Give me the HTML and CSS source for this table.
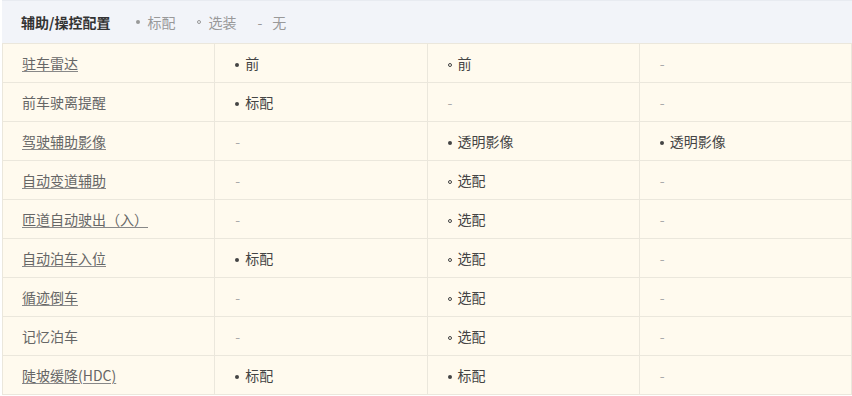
FILE: index.html
```html
<!DOCTYPE html>
<html lang="zh">
<head>
<meta charset="utf-8">
<link rel="stylesheet" href="styles.css">
</head>
<body>
<div class="wrap">
  <div class="head">
    <span class="title">辅助/操控配置</span>
    <span class="legend"><i class="dot"></i>标配</span>
    <span class="legend"><i class="ring"></i>选装</span>
    <span class="legend"><i class="dash">-</i>无</span>
  </div>
  <table class="grid">
    <tr><td class="name"><span class="link">驻车雷达</span></td><td><i class="dot"></i>前</td><td><i class="ring"></i>前</td><td class="none">-</td></tr>
    <tr><td class="name">前车驶离提醒</td><td><i class="dot"></i>标配</td><td class="none">-</td><td class="none">-</td></tr>
    <tr><td class="name"><span class="link">驾驶辅助影像</span></td><td class="none">-</td><td><i class="dot"></i>透明影像</td><td><i class="dot"></i>透明影像</td></tr>
    <tr><td class="name"><span class="link">自动变道辅助</span></td><td class="none">-</td><td><i class="ring"></i>选配</td><td class="none">-</td></tr>
    <tr><td class="name"><span class="link">匝道自动驶出（入）</span></td><td class="none">-</td><td><i class="ring"></i>选配</td><td class="none">-</td></tr>
    <tr><td class="name"><span class="link">自动泊车入位</span></td><td><i class="dot"></i>标配</td><td><i class="ring"></i>选配</td><td class="none">-</td></tr>
    <tr><td class="name"><span class="link">循迹倒车</span></td><td class="none">-</td><td><i class="ring"></i>选配</td><td class="none">-</td></tr>
    <tr><td class="name">记忆泊车</td><td class="none">-</td><td><i class="ring"></i>选配</td><td class="none">-</td></tr>
    <tr><td class="name"><span class="link">陡坡缓降(HDC)</span></td><td><i class="dot"></i>标配</td><td><i class="dot"></i>标配</td><td class="none">-</td></tr>
  </table>
</div>
</body>
</html>
```
FILE: styles.css
```css
html, body {
  margin: 0;
  padding: 0;
  background: #ffffff;
}
body {
  font-family: "Microsoft YaHei", "Noto Sans CJK SC", "Noto Sans", sans-serif;
  font-size: 14px;
  color: #444;
}
.wrap {
  margin-left: 2px;
  width: 850px;
}
.head {
  height: 43px;
  background: #f2f4f9;
  border-top: 1px solid #e8ebf1;
  display: flex;
  align-items: center;
  padding-left: 19px;
  box-sizing: border-box;
}
.title {
  font-weight: bold;
  color: #333;
  margin-right: 25px;
}
.legend {
  color: #999;
  margin-right: 21px;
  display: inline-flex;
  align-items: center;
}
.legend .dot,
.legend .ring {
  margin-right: 7px;
}
.dash {
  font-style: normal;
  margin-right: 10px;
}
.dot {
  display: inline-block;
  width: 4px;
  height: 4px;
  border-radius: 50%;
  background: currentColor;
  margin: 0 6px 0 1px;
  vertical-align: middle;
}
.ring {
  display: inline-block;
  width: 4px;
  height: 4px;
  border-radius: 50%;
  border: 1px solid currentColor;
  box-sizing: border-box;
  margin: 0 6px 0 1px;
  vertical-align: middle;
}
.grid {
  width: 850px;
  border-collapse: collapse;
  table-layout: fixed;
  background: #fffaee;
}
.grid td {
  height: 38px;
  padding: 0 0 0 19px;
  border: 1px solid #ebe7dc;
  color: #444;
  white-space: nowrap;
}
.grid td.name {
  color: #666;
}
.grid td.none {
  color: #aaa;
  padding-left: 20px;
}
.link {
  text-decoration: underline;
  text-decoration-color: #888;
  text-underline-offset: 2px;
}
```
